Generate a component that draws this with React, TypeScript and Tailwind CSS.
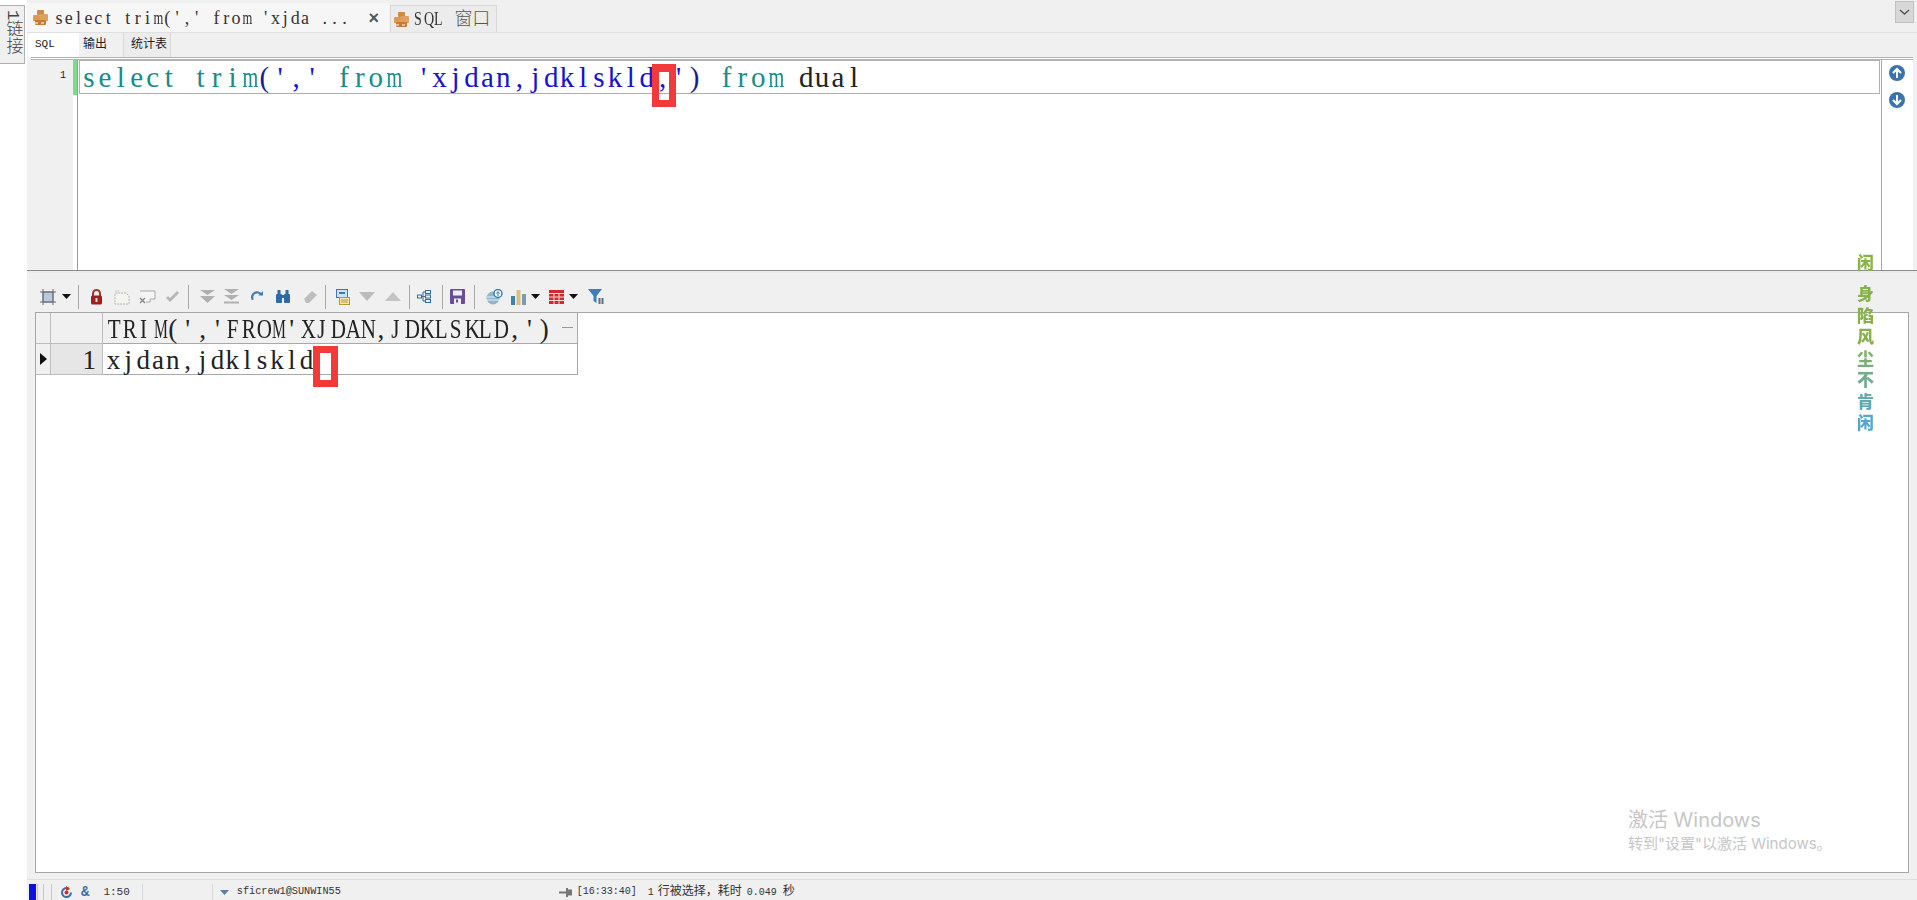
import React from "react";

const Cell = ({ className, children }: { className: string; children?: React.ReactNode }) => (
  <div className={`flex h-[20px] shrink-0 items-center justify-center ${className}`}>{children}</div>
);
const Sep = ({ className = "" }: { className?: string }) => <div className={`h-[24px] w-px shrink-0 bg-[#a8a8a8] ${className}`} />;
const Drop = () => (
  <svg width="9" height="5" viewBox="0 0 9 5"><path d="M0 0h9L4.500 5z" fill="#111" /></svg>
);

/* fixed-pitch serif text: every character sits in a cell of the same width, wide glyphs are condensed to fit */
const fit = (c: string) => {
  if (c === "m") return "scale-x-[0.7]";
  if (c === "M") return "scale-x-[0.58]";
  if (c >= "A" && c <= "Z") return "scale-x-[0.78]";
  return "";
};
const Pitch = ({ text, cell }: { text: string; cell: string }) => (
  <>
    {Array.from(text).map((c, i) => (
      <span key={i} className={`inline-block whitespace-pre text-center ${cell} ${fit(c)}`}>{c}</span>
    ))}
  </>
);
const EDITOR = "w-[15.94px]";
const GRID = "w-[14.87px]";
const TAB = "w-[9.85px]";

const DbIcon = () => (
  <svg width="17" height="17" viewBox="0 0 17 17">
    <rect x="5" y="1" width="7" height="5" rx="1" fill="#cf8a45" />
    <rect x="1" y="6" width="7" height="6" rx="1" fill="#d99a55" />
    <rect x="8" y="5" width="8" height="7" rx="1" fill="#e0a060" />
    <rect x="3" y="11" width="11" height="5" rx="1" fill="#c97a35" />
    <path d="M3 14h3M9 14h3" stroke="#fff" strokeWidth="1.2" />
  </svg>
);

const Toolbar = () => (
  <div className="flex h-[39px] items-center pl-[9px] pt-[8px]">
    <Cell className="w-[24px]">
      <svg width="18" height="18" viewBox="0 0 18 18" fill="none">
        <rect x="4" y="4" width="10" height="10" fill="#b9c7e0" stroke="#6a7a90" />
        <path d="M4 1v16M14 1v16M1 4h16M1 14h16" stroke="#6a6a6a" strokeWidth="1" />
      </svg>
    </Cell>
    <Cell className="w-[12px]"><Drop /></Cell>
    <Sep className="ml-[6px]" />
    <Cell className="ml-[4px] w-[26px]">
      <svg width="13" height="16" viewBox="0 0 13 16">
        <path d="M3 7V4.500a3.500 3.500 0 017 0V7" fill="none" stroke="#a8322e" strokeWidth="2" />
        <rect x="1" y="6.500" width="11" height="9" rx="1.500" fill="#a01f1c" />
        <rect x="5.500" y="9" width="2" height="4" fill="#f3d9d9" />
      </svg>
    </Cell>
    <Cell className="w-[26px]">
      <svg width="16" height="16" viewBox="0 0 16 16" fill="none">
        <path d="M1 4h11l3 3v8H1z" fill="#f5f5f0" stroke="#b0b0b0" strokeDasharray="2 1" />
        <path d="M1 1h4v4H1z" fill="#ddd" />
      </svg>
    </Cell>
    <Cell className="w-[25px]">
      <svg width="17" height="15" viewBox="0 0 17 15" fill="none">
        <path d="M1 2h15v8h-5v3H7" stroke="#a8a8a8" fill="#f5f5f5" />
        <path d="M1 9l5 5M6 9l-5 5" stroke="#888" strokeWidth="1.400" />
      </svg>
    </Cell>
    <Cell className="w-[25px]">
      <svg width="15" height="12" viewBox="0 0 15 12"><path d="M1 7l4 4 9-9-2-2-7 7-2-2z" fill="#b5b5b5" /></svg>
    </Cell>
    <Sep className="ml-[3px]" />
    <Cell className="ml-[6px] w-[24px]">
      <svg width="15" height="13" viewBox="0 0 15 13" fill="#b0b0b0"><path d="M0 0h15l-7.500 5z" /><path d="M0 6h15l-7.500 7z" /></svg>
    </Cell>
    <Cell className="w-[24px]">
      <svg width="15" height="15" viewBox="0 0 15 15" fill="#b0b0b0"><path d="M0 0h15l-7.500 5z" /><path d="M0 6h15l-7.500 5z" /><rect y="12.500" width="15" height="2" /></svg>
    </Cell>
    <Cell className="ml-[2px] w-[24px]">
      <svg width="12" height="12" viewBox="0 0 13 13" fill="none"><path d="M11 4A5 5 0 102 9.500" stroke="#3a7fb8" strokeWidth="2.400" /><path d="M8 5h5V0z" fill="#3a7fb8" /></svg>
    </Cell>
    <Cell className="w-[28px]">
      <svg width="14" height="13" viewBox="0 0 14 13" fill="#2c6aa8"><rect x="0" y="4" width="6" height="9" rx="1" /><rect x="8" y="4" width="6" height="9" rx="1" /><rect x="1.500" y="0" width="3" height="5" /><rect x="9.500" y="0" width="3" height="5" /><rect x="5" y="5" width="4" height="3" /></svg>
    </Cell>
    <Cell className="w-[26px]">
      <svg width="15" height="14" viewBox="0 0 15 14"><path d="M1 9l8-8 5 4-8 8H3z" fill="#bdbdbd" /></svg>
    </Cell>
    <Sep className="ml-[2px]" />
    <Cell className="ml-[5px] w-[24px]">
      <svg width="14" height="16" viewBox="0 0 14 16" fill="none"><rect x=".5" y=".5" width="11" height="8" fill="#cfe0f2" stroke="#3a78b5" /><rect x="3" y="3" width="6" height="2" fill="#3a78b5" /><rect x="3.500" y="8.500" width="10" height="7" fill="#f5e6a8" stroke="#b59a3a" /><path d="M5 11h7M5 13h7" stroke="#b59a3a" /></svg>
    </Cell>
    <Cell className="w-[24px]">
      <svg width="16" height="9" viewBox="0 0 16 9"><path d="M0 0h16L8 9z" fill="#bcbcbc" /></svg>
    </Cell>
    <Cell className="ml-[2px] w-[24px]">
      <svg width="16" height="9" viewBox="0 0 16 9"><path d="M0 9h16L8 0z" fill="#c4c4c4" /></svg>
    </Cell>
    <Sep className="ml-[4px]" />
    <Cell className="ml-[2px] w-[24px]">
      <svg width="14" height="13" viewBox="0 0 14 13" fill="none" stroke="#2d6ca8"><rect x=".5" y="5" width="4" height="3" /><rect x="8.500" y=".5" width="5" height="3" /><rect x="8.500" y="5" width="5" height="3" /><rect x="8.500" y="9.500" width="5" height="3" /><path d="M4.500 6.500h4M6 2v9M6 2h2.500M6 11h2.500" /></svg>
    </Cell>
    <Sep className="ml-[6px]" />
    <Cell className="ml-[2px] w-[24px]">
      <svg width="15" height="15" viewBox="0 0 15 15"><rect width="15" height="15" rx="1" fill="#6a4c9c" /><rect x="3" y="1.500" width="9" height="5" fill="#f2eef8" /><rect x="4" y="9.500" width="7" height="5.500" fill="#f2eef8" /><rect x="6" y="10.500" width="2" height="3" fill="#6a4c9c" /></svg>
    </Cell>
    <Sep className="ml-[5px]" />
    <Cell className="ml-[7px] w-[24px]">
      <svg width="17" height="16" viewBox="0 0 17 16"><ellipse cx="7" cy="9" rx="6.500" ry="6.500" fill="#8fb6c9" /><path d="M1 8h12M1 11h12" stroke="#e8f0f4" /><circle cx="12" cy="4.500" r="4" fill="#fff" stroke="#3278b5" strokeWidth="1.400" /><path d="M12 7V3M10.500 4.500L12 2.500l1.500 2" stroke="#3278b5" fill="none" /></svg>
    </Cell>
    <Cell className="w-[24px]">
      <svg width="15" height="16" viewBox="0 0 15 16"><rect x="0" y="7" width="4" height="9" fill="#3f80b5" /><rect x="5.500" y="1" width="4" height="15" fill="#dcc07a" /><rect x="11" y="5" width="4" height="11" fill="#7a9db5" /></svg>
    </Cell>
    <Cell className="w-[10px]"><Drop /></Cell>
    <Cell className="ml-[4px] w-[24px]">
      <svg width="15" height="14" viewBox="0 0 15 14"><rect width="15" height="14" fill="#cf2a2e" /><path d="M0 3.500h15M0 7h15M0 10.500h15M5 3.500V14M10 3.500V14" stroke="#f7d7d7" /></svg>
    </Cell>
    <Cell className="w-[10px]"><Drop /></Cell>
    <Cell className="ml-[6px] w-[24px]">
      <svg width="16" height="15" viewBox="0 0 16 15"><path d="M0 0h14L8.500 7v7L5.500 12V7z" fill="#3d7fb5" /><rect x="10.500" y="9" width="2" height="6" fill="#5a6f80" /><rect x="13.500" y="9" width="2" height="6" fill="#5a6f80" /></svg>
    </Cell>
  </div>
);

export default function App() {
  return (
    <div className="relative flex h-[900px] w-[1917px] overflow-hidden bg-white font-['Liberation_Mono','Noto_Sans_CJK_SC',monospace] text-[#222]">
      <div className="w-[27px] shrink-0 pt-[5px]">
        <div className="flex h-[59px] w-[25px] items-center justify-center border border-l-0 border-[#b0b0b0] bg-[#f0f0f0] pb-[4px] text-[17px] font-light leading-none text-[#444] [writing-mode:vertical-rl]">
          1链接
        </div>
      </div>

      <div className="flex min-w-0 flex-1 flex-col bg-[#f0f0f0]">
        {/* document tabs */}
        <div className="flex h-[33px] shrink-0 items-end border-b border-[#e0e0e0] pl-px">
          <div className="flex h-[29px] w-[361px] items-center gap-[5px] bg-[#f6f6f6] pl-[4px] pr-[10px] font-['Liberation_Serif','Noto_Sans_CJK_SC',serif] text-[18px] leading-none text-[#333]">
            <DbIcon />
            <span className="flex-1 whitespace-pre"><Pitch text="select trim(',' from 'xjda ..." cell={TAB} /></span>
            <span className="font-['Liberation_Sans',sans-serif] text-[18px] font-bold leading-none text-[#555]">×</span>
          </div>
          <div className="ml-px flex h-[27px] w-[107px] items-center gap-[3px] border-x border-t border-[#d8d8d8] bg-[#ececec] pl-[2px] font-['Liberation_Serif','Noto_Sans_CJK_SC',serif] text-[18px] leading-none text-[#333]">
            <DbIcon />
            <span className="whitespace-pre"><Pitch text="SQL " cell={TAB} /><span className="ml-[2px] text-[18px] font-light text-[#555]">窗口</span></span>
          </div>
          <div className="ml-auto mb-[9px] mr-[3px] flex h-[22px] w-[19px] items-center justify-center border border-[#c0c0c0] bg-[#d8d8d8]">
            <svg width="11" height="6" viewBox="0 0 11 6" fill="none"><path d="M1 1l4.500 4L10 1" stroke="#555" strokeWidth="1.500" /></svg>
          </div>
        </div>

        {/* editor sub tabs */}
        <div className="flex h-[24px] shrink-0 pl-px text-[12px] leading-none">
          <div className="flex w-[51px] items-center bg-white pb-[2px] pl-[7px] text-[11px]">SQL</div>
          <div className="flex w-[45px] items-center border-r border-[#d8d8d8] bg-[#f0f0f0] pl-[4px]">输出</div>
          <div className="flex w-[47px] items-center border-r border-[#d8d8d8] bg-[#ececec] pl-[7px]">统计表</div>
        </div>

        {/* editor */}
        <div className="mx-[4px] h-[213px] shrink-0 border-t-[3px] border-double border-[#b4b4b4] bg-white">
          <div className="flex h-full">
            <div className="relative w-[42px] shrink-0 bg-[#f0f0f0] pr-[7px] pt-[11px] text-right text-[10px] leading-none">
              1
            </div>
            <div className="h-[35px] w-[4px] shrink-0 bg-[#7fdc86]" />
            <div className="h-full w-[2px] shrink-0 border-l border-[#9a9a9a]" />
            <div className="flex h-full min-w-0 flex-1 flex-col border-r border-[#a8a8a8] pr-px">
              <div className="flex h-[34px] items-center whitespace-pre border border-[#b0b0b0] pl-[1px] font-['Liberation_Serif',serif] text-[29px] leading-none text-[#1a8a8a]">
                <span><Pitch text="select trim" cell={EDITOR} /></span>
                <span className="text-[#1a1a90]"><Pitch text="(" cell={EDITOR} /></span>
                <span className="text-[#1414d0]"><Pitch text="','" cell={EDITOR} /></span>
                <span><Pitch text=" from " cell={EDITOR} /></span>
                <span className="text-[#1414d0]"><Pitch text="'xjdan,jdklskld,'" cell={EDITOR} /></span>
                <span className="text-[#1a1a90]"><Pitch text=")" cell={EDITOR} /></span>
                <span><Pitch text=" from " cell={EDITOR} /></span>
                <span className="text-[#222]"><Pitch text="dual" cell={EDITOR} /></span>
              </div>
            </div>
            <div className="flex w-[31px] shrink-0 flex-col items-center gap-[11px] pr-[1px] pt-[5px]">
              <svg width="16" height="16" viewBox="0 0 16 16"><circle cx="8" cy="8" r="8" fill="#3b74ad" /><path d="M8 13V4M4 8l4-4 4 4" fill="none" stroke="#fff" strokeWidth="2" /></svg>
              <svg width="16" height="16" viewBox="0 0 16 16"><circle cx="8" cy="8" r="8" fill="#3b74ad" /><path d="M8 3v9M4 8l4 4 4-4" fill="none" stroke="#fff" strokeWidth="2" /></svg>
            </div>
          </div>
        </div>

        {/* splitter */}
        <div className="h-[3px] shrink-0 border-t border-[#8c8c8c] bg-[#ececec]" />

        <Toolbar />

        {/* results */}
        <div className="relative mx-[8px] min-h-0 flex-1 border border-[#a6a6a6] bg-white">
          <div className="w-[542px] font-['Liberation_Serif',serif] text-[27px] leading-none text-[#222]">
            <div className="flex h-[31px]">
              <div className="w-[15px] border-r border-b border-[#bdbdbd] bg-[#f0f0f0]" />
              <div className="w-[52px] border-r border-b border-[#bdbdbd] bg-[#f0f0f0]" />
              <div className="flex flex-1 items-center justify-between border-r border-b border-[#a8a8a8] bg-[#f0f0f0] pl-[3px] pr-[4px] pt-[3px]">
                <span className="whitespace-pre"><Pitch text="TRIM(','FROM'XJDAN,JDKLSKLD,')" cell={GRID} /></span>
                <span className="mb-[4px] h-px w-[11px] bg-[#999]" />
              </div>
            </div>
            <div className="flex h-[31px]">
              <div className="flex w-[15px] items-center justify-center border-r border-b border-[#bdbdbd] bg-[#f0f0f0]">
                <svg width="7" height="12" viewBox="0 0 7 12"><path d="M0 0l7 6-7 6z" fill="#111" /></svg>
              </div>
              <div className="flex w-[52px] items-center justify-end border-r border-b border-[#bdbdbd] bg-[#e6e6e6] pr-[6px] pt-[3px]">1</div>
              <div className="flex flex-1 items-center whitespace-pre border-r border-b border-[#a8a8a8] pl-[3px] pt-[3px]"><Pitch text="xjdan,jdklskld" cell={GRID} /></div>
            </div>
          </div>
          <div className="absolute bottom-[19px] right-[83px] w-[197px] font-['Inter','Noto_Sans_CJK_SC',sans-serif] text-[#c6c6c6]">
            <div className="text-[20px] leading-[24px]">激活 Windows</div>
            <div className="mt-[3px] whitespace-nowrap text-[15px] leading-[18px]">转到"设置"以激活 Windows。</div>
          </div>
        </div>

        <div className="h-[7px] shrink-0 border-b border-[#dedede]" />

        {/* status bar */}
        <div className="flex h-[20px] shrink-0 items-center pt-[4px] text-[10px] leading-none text-[#333]">
          <div className="ml-[2px] h-full w-[7px] bg-[#1010e0]" />
          <div className="ml-px h-full w-[7px] border-x border-[#c8c8c8]" />
          <div className="h-full w-[8px] border-r border-[#c8c8c8]" />
          <div className="ml-[7px] flex w-[14px] justify-center">
            <svg width="13" height="13" viewBox="0 0 13 13" fill="none"><path d="M11 6.500a4.500 4.500 0 11-2-3.700" stroke="#3a6ea8" strokeWidth="2" /><path d="M6 0l4 3-4 2z" fill="#c8322e" /><circle cx="6.500" cy="6.500" r="2" fill="#c8322e" /></svg>
          </div>
          <span className="ml-[8px] text-[14px] font-bold text-[#3a6ea8]">&amp;</span>
          <span className="ml-[14px] text-[11px]">1:50</span>
          <div className="ml-[12px] h-full w-px bg-[#d8d8d8]" />
          <div className="ml-[69px] h-full w-px bg-[#d8d8d8]" />
          <svg className="ml-[7px]" width="9" height="5" viewBox="0 0 9 5"><path d="M0 0h9L4.500 5z" fill="#5a7fa5" /></svg>
          <span className="ml-[8px] text-[10.2px]">sficrew1@SUNWIN55</span>
          <svg className="ml-[218px]" width="13" height="9" viewBox="0 0 13 9" fill="#777"><rect y="3.500" width="8" height="2" /><rect x="7" y="0" width="2" height="9" /><rect x="9" y="1.500" width="4" height="6" /></svg>
          <span className="ml-[5px] whitespace-pre">[16:33:40]</span>
          <span className="ml-[11px] whitespace-pre">1<span className="ml-[4px] text-[12px]">行被选择，耗时</span><span className="ml-[5px]">0.049</span><span className="ml-[6px] text-[12px]">秒</span></span>
        </div>
      </div>

      {/* annotations drawn over the panes */}
      <div className="absolute left-[652px] top-[64px] h-[43px] w-[24px] border-x-[7px] border-b-[7px] border-t-[8px] border-[#f23a3a]" />
      <div className="absolute left-[313px] top-[346px] h-[41px] w-[25px] border-x-[7px] border-b-[7px] border-t-[7px] border-[#f23a3a]" />

      {/* vertical decorative text */}
      <div className="absolute left-[1857px] top-[252px] flex h-[180px] w-[18px] flex-col justify-between bg-gradient-to-b from-[#86b443] via-[#86b04c] to-[#4fa3d8] bg-clip-text font-['Noto_Sans_CJK_SC',sans-serif] text-[17px] font-black leading-[20px] text-transparent">
        <span>闲</span>
        <span className="mt-[10px]">身</span>
        <span>陷</span>
        <span>风</span>
        <span>尘</span>
        <span>不</span>
        <span>肯</span>
        <span>闲</span>
      </div>
    </div>
  );
}
